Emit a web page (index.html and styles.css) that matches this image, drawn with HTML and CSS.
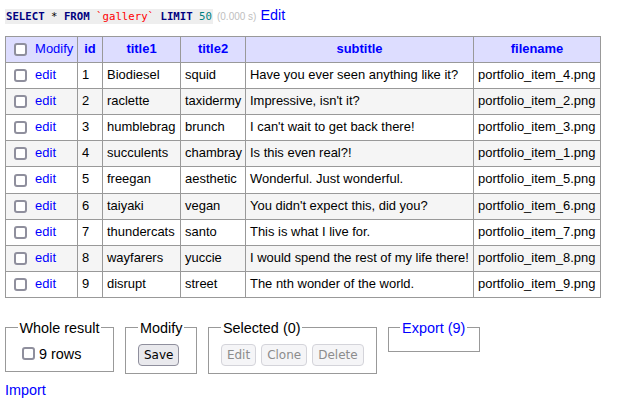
FILE: index.html
```html
<!DOCTYPE html>
<html>
<head>
<meta charset="utf-8">
<link rel="stylesheet" href="styles.css">
</head>
<body>
<p class="query"><code class="sql"><a class="kw">SELECT</a> * <a class="kw">FROM</a> <span class="bac">`gallery`</span> <a class="kw">LIMIT</a> <span class="num">50</span></code> <span class="time">(0.000 s)</span> <a href="#" class="link">Edit</a></p>
<table class="grid">
<colgroup><col class="c-sel"><col class="c-id"><col class="c-t1"><col class="c-t2"><col class="c-sub"><col class="c-file"></colgroup>
<thead>
<tr><th class="sel"><input type="checkbox" class="cb"> <a href="#" class="link">Modify</a></th><th>id</th><th>title1</th><th>title2</th><th>subtitle</th><th>filename</th></tr>
</thead>
<tbody>
<tr><td><input type="checkbox" class="cb"> <a href="#" class="link">edit</a></td><td>1</td><td>Biodiesel</td><td>squid</td><td>Have you ever seen anything like it?</td><td>portfolio_item_4.png</td></tr>
<tr><td><input type="checkbox" class="cb"> <a href="#" class="link">edit</a></td><td>2</td><td>raclette</td><td>taxidermy</td><td>Impressive, isn't it?</td><td>portfolio_item_2.png</td></tr>
<tr><td><input type="checkbox" class="cb"> <a href="#" class="link">edit</a></td><td>3</td><td>humblebrag</td><td>brunch</td><td>I can't wait to get back there!</td><td>portfolio_item_3.png</td></tr>
<tr><td><input type="checkbox" class="cb"> <a href="#" class="link">edit</a></td><td>4</td><td>succulents</td><td>chambray</td><td>Is this even real?!</td><td>portfolio_item_1.png</td></tr>
<tr><td><input type="checkbox" class="cb"> <a href="#" class="link">edit</a></td><td>5</td><td>freegan</td><td>aesthetic</td><td>Wonderful. Just wonderful.</td><td>portfolio_item_5.png</td></tr>
<tr><td><input type="checkbox" class="cb"> <a href="#" class="link">edit</a></td><td>6</td><td>taiyaki</td><td>vegan</td><td>You didn't expect this, did you?</td><td>portfolio_item_6.png</td></tr>
<tr><td><input type="checkbox" class="cb"> <a href="#" class="link">edit</a></td><td>7</td><td>thundercats</td><td>santo</td><td>This is what I live for.</td><td>portfolio_item_7.png</td></tr>
<tr><td><input type="checkbox" class="cb"> <a href="#" class="link">edit</a></td><td>8</td><td>wayfarers</td><td>yuccie</td><td>I would spend the rest of my life there!</td><td>portfolio_item_8.png</td></tr>
<tr><td><input type="checkbox" class="cb"> <a href="#" class="link">edit</a></td><td>9</td><td>disrupt</td><td>street</td><td>The nth wonder of the world.</td><td>portfolio_item_9.png</td></tr>
</tbody>
</table>
<div class="footer">
<fieldset class="box"><legend>Whole result</legend><label class="rows"><input type="checkbox" class="cb cb-inline">9 rows</label></fieldset>
<fieldset class="box"><legend>Modify</legend><div class="btns"><button class="btn">Save</button></div></fieldset>
<fieldset class="box"><legend>Selected (0)</legend><div class="btns"><button class="btn" disabled>Edit</button><button class="btn" disabled>Clone</button><button class="btn" disabled>Delete</button></div></fieldset>
<fieldset class="box empty"><legend><a href="#" class="link">Export (9)</a></legend></fieldset>
</div>
<p class="import"><a href="#" class="link">Import</a></p>
</body>
</html>
```

FILE: styles.css
```css
body {
  margin: 0;
  font: 14.4px/18px "Liberation Sans", Arial, sans-serif;
  color: #000;
  background: #fff;
}
.link { color: #00f; text-decoration: none; }

.query {
  margin: 6px 0 12px 5px;
}
.sql {
  font: 10.7px/10px "DejaVu Sans Mono", monospace;
  background: #eee;
  padding: 1px;
  color: #000;
}
.sql .kw { color: #000080; font-weight: bold; }
.sql .bac { color: red; }
.sql .num { color: #007f7f; }
.time { color: silver; font-size: 10px; line-height: 10px; }

.grid {
  border-collapse: collapse;
  table-layout: fixed;
  width: 596px;
  margin-left: 5px;
  font-size: 12.96px;
  line-height: 16.1px;
}
.c-sel { width: 72px; }
.c-id { width: 25px; }
.c-t1 { width: 78px; }
.c-t2 { width: 65px; }
.c-sub { width: 228px; }
.c-file { width: 127px; }

.grid th, .grid td {
  border: 1px solid #999;
  padding: 4px 4px 5px;
  white-space: nowrap;
  overflow: hidden;
  text-align: left;
}
.grid th {
  background: #ddf;
  color: #00f;
  font-weight: bold;
  text-align: center;
}
.grid th.sel { text-align: left; font-weight: normal; }
.grid tbody tr:nth-child(even) td { background: #f5f5f5; }

.cb {
  -webkit-appearance: none;
  appearance: none;
  display: inline-block;
  box-sizing: border-box;
  width: 13px;
  height: 13px;
  margin: 0 4.5px 0 4px;
  border: 2px solid #8f8f9d;
  border-radius: 3px;
  background: #fff;
  vertical-align: middle;
}

.footer {
  display: flex;
  align-items: flex-start;
  gap: 11px;
  margin: 21px 0 0 5px;
}
.box {
  margin: 0;
  padding: 7px 12px 7px 11.5px;
  border: 1px solid #999;
  min-width: 0;
}
.box legend {
  padding: 0 2px;
  line-height: 18px;
}
.rows {
  display: block;
  line-height: 20px;
}
.cb-inline {
  margin: 0 4.5px 0 4px;
  vertical-align: -1.5px;
}
.btns {
  display: flex;
  gap: 5px;
}
.btn {
  box-sizing: border-box;
  height: 22px;
  padding: 0 5px;
  font: 12px/20px "DejaVu Sans", sans-serif;
  color: #000;
  background: #e9e9ed;
  border: 1px solid #8f8f9d;
  border-radius: 4px;
}
.btn:disabled {
  color: #8c8c8c;
  background: #f5f5f7;
  border-color: #d4d4da;
}

.import {
  margin: 7px 0 0 5px;
}
```
